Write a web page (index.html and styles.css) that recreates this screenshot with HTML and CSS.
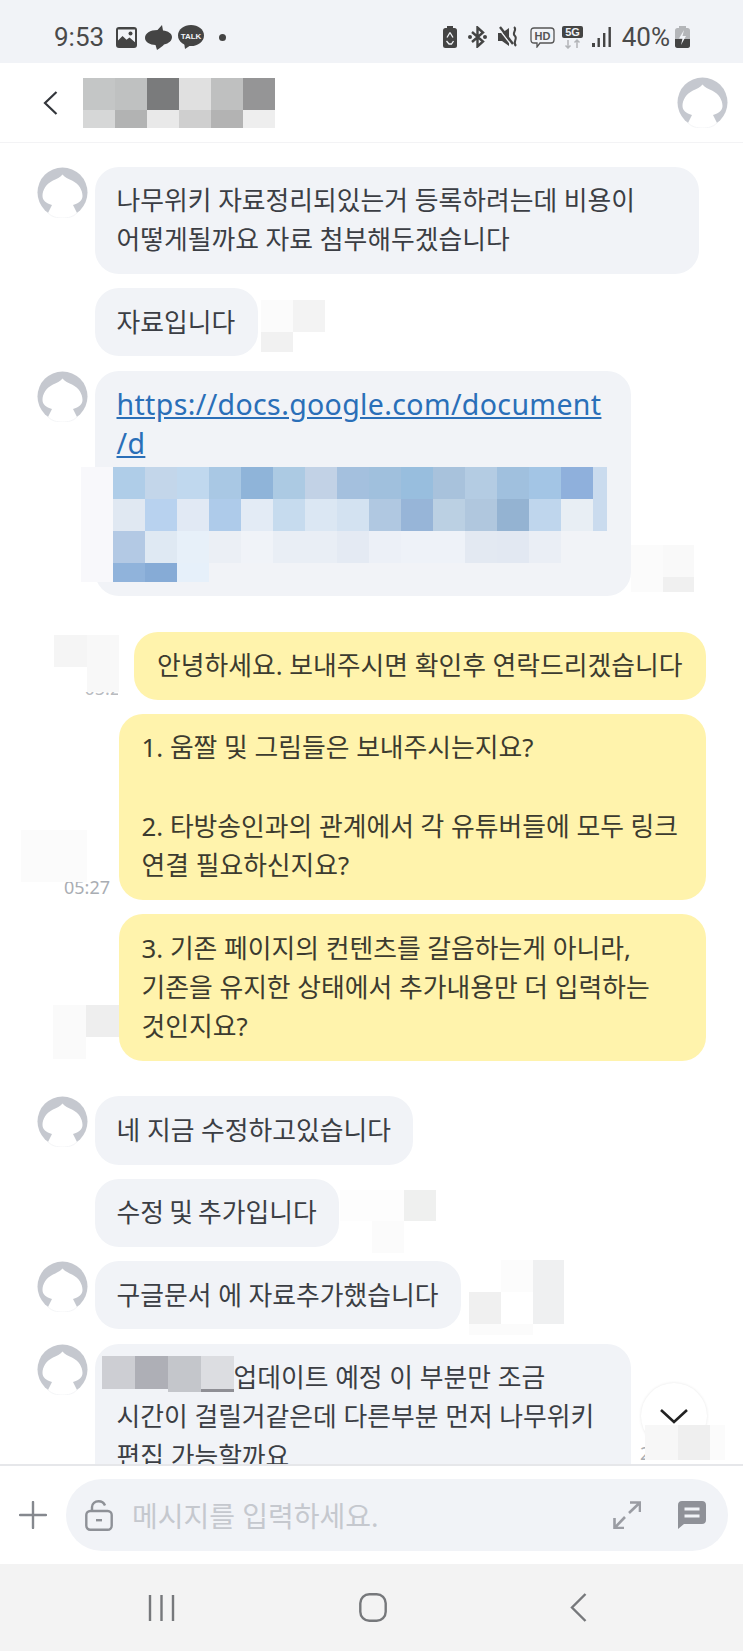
FILE: index.html

```html
<!DOCTYPE html>
<html lang="ko">
<head>
    <meta charset="UTF-8">
    <meta name="viewport" content="width=device-width, initial-scale=1.0">
    <title>채팅</title>
    <link rel="stylesheet" href="styles.css">
</head>
<body>
    <svg class="defs" width="0" height="0">
        <symbol id="avatar" viewBox="0 0 51 51">
            <circle cx="25.5" cy="25.5" r="25" fill="#c5c8cf"/>
            <path d="M25.5 7.5 C23 10.5 20 11.5 16 13.5 C9 17 5.5 23 5.5 29 C5.5 33 9 36.5 15 38 L11 46 C15 50 20 51 25.5 51 C31 51 36 50 40 46 L36 38 C42 36.5 45.5 33 45.5 29 C45.5 23 42 17 35 13.5 C31 11.5 28 10.5 25.5 7.5 Z" fill="#fff"/>
            <path d="M11 46 C15 50 20 51 25.5 51 C31 51 36 50 40 46" fill="none" stroke="#f4f5f7" stroke-width="1"/>
        </symbol>
    </svg>

    <div class="app">
        <div class="status-bar">
            <div class="status-left">
                <span class="clock">9:53</span>
                <svg class="ic-image" width="21" height="21" viewBox="0 0 21 21">
                    <rect width="21" height="21" rx="3" fill="#444"/>
                    <rect x="2" y="2.5" width="17" height="13.5" fill="#f1f3f7"/>
                    <circle cx="14.5" cy="6.5" r="2" fill="#444"/>
                    <path d="M2 16 V13.5 L6.5 9 L10.5 12.8 L13.5 10.5 L19 15.2 V16 Z" fill="#444"/>
                </svg>
                <svg class="ic-bolt" width="27" height="25" viewBox="0 0 27 25">
                    <path d="M17 0 L12.5 5 C5 5 0 8.5 0 13 C0 17 5 20 10.5 20 L12 25 C15 23 18 21 19 19.5 C24 18.5 27 15.5 27 12 C27 8.5 23 6 18 5.5 Z" fill="#444"/>
                </svg>
                <svg class="ic-talk" width="26" height="24" viewBox="0 0 26 24">
                    <ellipse cx="13" cy="10.5" rx="13" ry="10.5" fill="#444"/>
                    <path d="M6 17 L7 24 L13 20 Z" fill="#444"/>
                    <text x="13" y="13.5" text-anchor="middle" class="talk-label">TALK</text>
                </svg>
                <span class="status-dot"></span>
            </div>
            <div class="status-right">
                <svg width="14" height="22" viewBox="0 0 14 22">
                    <rect x="4" y="0" width="6" height="3" fill="#444"/>
                    <rect y="2" width="14" height="20" rx="2.5" fill="#444"/>
                    <path d="M7 6.5 L4 11.5 M7 6.5 L10 11.5 M3.5 15 L6 18 H8.5 L10.5 15" stroke="#f1f3f7" stroke-width="1.3" fill="none"/>
                </svg>
                <svg width="19" height="22" viewBox="0 0 19 22">
                    <path d="M4 6 L15 15.5 L9.5 20.5 V1.5 L15 6.5 L4 16" stroke="#444" stroke-width="2.4" fill="none"/>
                    <circle cx="2" cy="11" r="2" fill="#444"/>
                    <circle cx="17" cy="11" r="2" fill="#444"/>
                </svg>
                <svg width="21" height="22" viewBox="0 0 21 22">
                    <path d="M0 7 H4 L11 2 V20 L4 15 H0 Z" fill="#444"/>
                    <path d="M1 3 L14 20" stroke="#f1f3f7" stroke-width="1.5"/>
                    <path d="M2 1 L15 18" stroke="#444" stroke-width="2.4"/>
                    <path d="M16 1 C20 4 13 7 17 10 C20 13 14 16 18 20" stroke="#444" stroke-width="2" fill="none"/>
                </svg>
                <svg class="ic-hd" width="25" height="21" viewBox="0 0 25 21">
                    <path d="M4 1 H21 C23 1 24 2 24 4 V13 C24 15 23 16 21 16 H10 L7 20 V16 H4 C2 16 1 15 1 13 V4 C1 2 2 1 4 1 Z" fill="none" stroke="#555" stroke-width="1.3"/>
                    <text x="12.5" y="13" text-anchor="middle" class="hd-label">HD</text>
                </svg>
                <svg class="ic-net" width="21" height="23" viewBox="0 0 21 23">
                    <rect width="21" height="12" rx="2" fill="#444"/>
                    <text x="10.5" y="10" text-anchor="middle" class="net-label">5G</text>
                    <path d="M6 14 V22 M3.5 19.5 L6 22 L8.5 19.5 M15 22 V14 M12.5 16.5 L15 14 L17.5 16.5" stroke="#b2b4b8" stroke-width="1.5" fill="none"/>
                </svg>
                <svg class="ic-signal" width="19" height="20" viewBox="0 0 19 20">
                    <rect x="0" y="16" width="3" height="4" fill="#444"/>
                    <rect x="5.5" y="11" width="2.4" height="9" fill="#444"/>
                    <rect x="11" y="6" width="2.4" height="14" fill="#444"/>
                    <rect x="16.5" y="0" width="2.4" height="20" fill="#444"/>
                </svg>
                <span class="battery-text">40%</span>
                <svg class="ic-battery" width="15" height="22" viewBox="0 0 15 22">
                    <rect x="4" y="0" width="7" height="3" fill="#b4b6b9"/>
                    <rect y="2" width="15" height="20" rx="2.5" fill="#b4b6b9"/>
                    <path d="M0 13 H15 V19.5 C15 21 14 22 12.5 22 H2.5 C1 22 0 21 0 19.5 Z" fill="#444"/>
                    <path d="M9 4 L4 12.5 H7.5 L6 19 L11 10 H7.5 Z" fill="#f1f3f7"/>
                </svg>
            </div>
        </div>

        <header class="top-bar">
            <svg class="back" width="15" height="24" viewBox="0 0 15 24">
                <path d="M13.5 1 L2 12 L13.5 23" fill="none" stroke="#33363b" stroke-width="2.2"/>
            </svg>
            <svg class="name-mosaic" width="192" height="50" viewBox="0 0 192 50" shape-rendering="crispEdges">
                <rect x="0" width="32" height="32" fill="#c4c6c6"/><rect x="32" width="32" height="32" fill="#bfc1c1"/>
                <rect x="64" width="32" height="32" fill="#7a7b7c"/><rect x="96" width="32" height="32" fill="#e0e0e0"/>
                <rect x="128" width="32" height="32" fill="#bfc0c0"/><rect x="160" width="32" height="32" fill="#959596"/>
                <rect x="0" y="32" width="32" height="18" fill="#d6d7d7"/><rect x="32" y="32" width="32" height="18" fill="#b2b3b3"/>
                <rect x="64" y="32" width="32" height="18" fill="#e9e9e9"/><rect x="96" y="32" width="32" height="18" fill="#cfcfcf"/>
                <rect x="128" y="32" width="32" height="18" fill="#b3b3b3"/><rect x="160" y="32" width="32" height="18" fill="#eeeeee"/>
            </svg>
            <svg class="avatar top-avatar"><use href="#avatar"/></svg>
        </header>

        <main class="chat">
            <div class="row">
                <svg class="avatar"><use href="#avatar"/></svg>
                <div class="bubble w-full">나무위키 자료정리되있는거 등록하려는데 비용이<br>어떻게될까요 자료 첨부해두겠습니다</div>
            </div>

            <div class="row">
                <div class="bubble">자료입니다</div>
                <svg class="blot blot-a" width="64" height="52" shape-rendering="crispEdges">
                    <rect width="32" height="32" fill="#fbfbfb"/><rect x="32" width="32" height="32" fill="#f3f3f3"/>
                    <rect y="32" width="32" height="20" fill="#f1f1f1"/>
                </svg>
            </div>

            <div class="row">
                <svg class="avatar"><use href="#avatar"/></svg>
                <div class="bubble w-wide">
                    <a class="link" href="#">https://docs.google.com/document<br>/d</a>
                    <svg class="link-mosaic" width="526" height="115" shape-rendering="crispEdges">
                        <rect width="32" height="115" fill="#f8f8fb"/>
                        <g transform="translate(32 0)">
                            <rect x="0" width="32" height="32" fill="#afcde8"/><rect x="32" width="32" height="32" fill="#c3d6ea"/>
                            <rect x="64" width="32" height="32" fill="#c0d8ee"/><rect x="96" width="32" height="32" fill="#a9c8e4"/>
                            <rect x="128" width="32" height="32" fill="#8fb4d9"/><rect x="160" width="32" height="32" fill="#accae3"/>
                            <rect x="192" width="32" height="32" fill="#c2d2e6"/><rect x="224" width="32" height="32" fill="#a4c0de"/>
                            <rect x="256" width="32" height="32" fill="#a0c0dd"/><rect x="288" width="32" height="32" fill="#98bede"/>
                            <rect x="320" width="32" height="32" fill="#a8c2dc"/><rect x="352" width="32" height="32" fill="#b4cce3"/>
                            <rect x="384" width="32" height="32" fill="#a0c0de"/><rect x="416" width="32" height="32" fill="#a3c5e5"/>
                            <rect x="448" width="32" height="32" fill="#8fb0dc"/><rect x="480" width="14" height="32" fill="#cadbee"/>
                        </g>
                        <g transform="translate(32 32)">
                            <rect x="0" width="32" height="32" fill="#e0e8f2"/><rect x="32" width="32" height="32" fill="#b8d2ef"/>
                            <rect x="64" width="32" height="32" fill="#e1e9f4"/><rect x="96" width="32" height="32" fill="#aecbea"/>
                            <rect x="128" width="32" height="32" fill="#e3ebf5"/><rect x="160" width="32" height="32" fill="#c6dbee"/>
                            <rect x="192" width="32" height="32" fill="#dbe7f3"/><rect x="224" width="32" height="32" fill="#d3e2f1"/>
                            <rect x="256" width="32" height="32" fill="#b0c8e1"/><rect x="288" width="32" height="32" fill="#97b5d8"/>
                            <rect x="320" width="32" height="32" fill="#bbd0e3"/><rect x="352" width="32" height="32" fill="#b0c7de"/>
                            <rect x="384" width="32" height="32" fill="#94b3d2"/><rect x="416" width="32" height="32" fill="#bfd6ed"/>
                            <rect x="448" width="32" height="32" fill="#e8eef4"/><rect x="480" width="14" height="32" fill="#cadbee"/>
                        </g>
                        <g transform="translate(32 64)">
                            <rect x="0" width="32" height="32" fill="#b3c9e4"/><rect x="32" width="32" height="32" fill="#dfe9f3"/>
                            <rect x="64" width="32" height="32" fill="#e7f0f9"/><rect x="96" width="32" height="32" fill="#ebeff5"/>
                            <rect x="128" width="32" height="32" fill="#f0f3f8"/><rect x="160" width="32" height="32" fill="#e9eef5"/>
                            <rect x="192" width="32" height="32" fill="#e9eef5"/><rect x="224" width="32" height="32" fill="#e4eaf3"/>
                            <rect x="256" width="32" height="32" fill="#ecf0f7"/><rect x="288" width="32" height="32" fill="#eef2f8"/>
                            <rect x="320" width="32" height="32" fill="#eef2f8"/><rect x="352" width="32" height="32" fill="#e3e9f2"/>
                            <rect x="384" width="32" height="32" fill="#e2e8f2"/><rect x="416" width="32" height="32" fill="#eaeef5"/>
                        </g>
                        <g transform="translate(32 96)">
                            <rect x="0" width="32" height="19" fill="#90b3db"/><rect x="32" width="32" height="19" fill="#86abd6"/>
                            <rect x="64" width="32" height="19" fill="#e6f0fa"/>
                        </g>
                    </svg>
                </div>
                <svg class="blot blot-b" width="63" height="47" shape-rendering="crispEdges">
                    <rect width="32" height="47" fill="#fbfbfb"/><rect x="32" width="31" height="32" fill="#f9f9f9"/>
                    <rect x="32" y="32" width="31" height="15" fill="#f0f0f0"/>
                </svg>
            </div>

            <div class="row mine group-start">
                <div class="side side-first">
                    <span class="time time-first">05:27</span>
                    <svg class="blot blot-c" width="65" height="57" shape-rendering="crispEdges">
                        <rect width="33" height="32" fill="#f5f5f5"/><rect x="33" width="32" height="57" fill="#f8f8f8"/>
                        <rect y="32" width="33" height="25" fill="#fff"/>
                    </svg>
                </div>
                <div class="bubble bubble-mine w-first">안녕하세요. 보내주시면 확인후 연락드리겠습니다</div>
            </div>

            <div class="row mine">
                <div class="side side-second">
                    <span class="time">05:27</span>
                    <svg class="blot blot-d" width="66" height="52" shape-rendering="crispEdges">
                        <rect width="66" height="52" fill="#fbfbfb"/>
                    </svg>
                </div>
                <div class="bubble bubble-mine w-mine">1. 움짤 및 그림들은 보내주시는지요?<br><br>2. 타방송인과의 관계에서 각 유튜버들에 모두 링크<br>연결 필요하신지요?</div>
            </div>

            <div class="row mine">
                <svg class="blot blot-e" width="66" height="54" shape-rendering="crispEdges">
                    <rect width="33" height="54" fill="#fafafa"/><rect x="33" width="33" height="32" fill="#eeeeee"/>
                </svg>
                <div class="bubble bubble-mine w-mine">3. 기존 페이지의 컨텐츠를 갈음하는게 아니라,<br>기존을 유지한 상태에서 추가내용만 더 입력하는<br>것인지요?</div>
            </div>

            <div class="row group-start">
                <svg class="avatar"><use href="#avatar"/></svg>
                <div class="bubble">네 지금 수정하고있습니다</div>
            </div>

            <div class="row">
                <div class="bubble w-short">수정 및 추가입니다</div>
                <svg class="blot blot-f" width="96" height="63" shape-rendering="crispEdges">
                    <rect width="64" height="31" fill="#fdfdfd"/><rect x="64" width="32" height="31" fill="#eff0ef"/>
                    <rect x="32" y="31" width="32" height="32" fill="#fbfbfb"/>
                </svg>
            </div>

            <div class="row">
                <svg class="avatar"><use href="#avatar"/></svg>
                <div class="bubble">구글문서 에 자료추가했습니다</div>
                <svg class="blot blot-g" width="95" height="75" shape-rendering="crispEdges">
                    <rect x="32" width="32" height="32" fill="#fcfcfc"/><rect x="64" width="31" height="64" fill="#eff0f1"/>
                    <rect y="32" width="32" height="32" fill="#f0f0f0"/><rect y="64" width="64" height="11" fill="#fbfbfb"/>
                </svg>
            </div>

            <div class="row">
                <svg class="avatar"><use href="#avatar"/></svg>
                <div class="bubble w-wide">
                    <svg class="inline-mosaic" width="132" height="36" shape-rendering="crispEdges">
                        <rect width="33" height="33" fill="#cdced3"/><rect x="33" width="33" height="33" fill="#aeafb6"/>
                        <rect x="66" width="33" height="36" fill="#c4c6cb"/><rect x="99" width="33" height="33" fill="#dcdde1"/>
                        <rect x="99" y="33" width="33" height="3" fill="#8f8f95"/>
                    </svg>
                    <span class="after-mosaic">업데이트 예정 이 부분만 조금</span><br>시간이 걸릴거같은데 다른부분 먼저 나무위키<br>편집 가능할까요
                </div>
            </div>

            <button class="scroll-down">
                <svg width="30" height="16" viewBox="0 0 30 16">
                    <path d="M2 2 L15 14 L28 2" fill="none" stroke="#222" stroke-width="2.6"/>
                </svg>
            </button>
            <span class="time time-cut">2</span>
            <svg class="blot blot-h" width="80" height="35" shape-rendering="crispEdges">
                <rect width="33" height="35" fill="#f7f7f7"/><rect x="33" width="32" height="35" fill="#efefef"/>
                <rect x="65" width="15" height="35" fill="#fbfbfb"/>
            </svg>
        </main>

        <footer class="composer">
            <svg class="plus" width="28" height="28" viewBox="0 0 28 28">
                <path d="M14 1 V27 M1 14 H27" stroke="#85888e" stroke-width="2.4" fill="none" stroke-linecap="round"/>
            </svg>
            <div class="input-pill">
                <svg width="28" height="31" viewBox="0 0 28 31">
                    <rect x="1.3" y="11" width="25.4" height="18.7" rx="4" fill="none" stroke="#8e9197" stroke-width="2.4"/>
                    <path d="M7 11 V7 C7 3.5 10 1.3 13.5 1.3 C16.5 1.3 19 3 20 5.5" fill="none" stroke="#8e9197" stroke-width="2.4"/>
                    <rect x="11" y="19" width="6" height="2.4" fill="#8e9197"/>
                </svg>
                <span class="placeholder">메시지를 입력하세요.</span>
                <svg class="expand" width="28" height="28" viewBox="0 0 28 28">
                    <path d="M17 1.5 H27 V11 M27 1.5 L16 12 M11 27 H1.5 V17 M1.5 27 L12 16" fill="none" stroke="#9a9ca3" stroke-width="2.6"/>
                </svg>
                <svg width="28" height="28" viewBox="0 0 28 28">
                    <path d="M4 0 H24 C26.5 0 28 1.5 28 4 V19 C28 21.5 26.5 23 24 23 H6 L0 28 V4 C0 1.5 1.5 0 4 0 Z" fill="#8f9198"/>
                    <path d="M6.5 8 H21.5 M6.5 15 H21.5" stroke="#f1f3f7" stroke-width="3"/>
                </svg>
            </div>
        </footer>

        <nav class="nav-bar">
            <svg width="27" height="28" viewBox="0 0 27 28">
                <path d="M2 1 V27 M13.5 1 V27 M25 1 V27" stroke="#76787b" stroke-width="2.4" fill="none"/>
            </svg>
            <svg width="28" height="29" viewBox="0 0 28 29">
                <rect x="1.3" y="1.3" width="25.4" height="26.4" rx="9" fill="none" stroke="#76787b" stroke-width="2.4"/>
            </svg>
            <svg width="17" height="29" viewBox="0 0 17 29">
                <path d="M15.5 1 L2 14.5 L15.5 28" fill="none" stroke="#76787b" stroke-width="2.4"/>
            </svg>
        </nav>
    </div>
</body>
</html>
```

FILE: styles.css

```css
* {
    box-sizing: border-box;
}
body {
    margin: 0;
    background: #fff;
    font-family: "Noto Sans", "Noto Sans CJK KR", sans-serif;
    color: #3b3e44;
}
.defs {
    position: absolute;
}
.app {
    display: flex;
    flex-direction: column;
    width: 743px;
    height: 1651px;
    overflow: hidden;
}

/* status bar */
.status-bar {
    flex: none;
    display: flex;
    justify-content: space-between;
    align-items: center;
    height: 63px;
    padding: 22px 53px 11px 54px;
    background: #f1f3f7;
    color: #4a4a4a;
}
.status-left, .status-right {
    display: flex;
    align-items: center;
}
.clock, .battery-text {
    font-family: Roboto, sans-serif;
    font-size: 26px;
}
.ic-image {
    margin-left: 12px;
}
.ic-bolt {
    margin-left: 8px;
}
.ic-talk {
    margin-left: 6px;
}
.talk-label {
    font: bold 8px "Liberation Sans", sans-serif;
    fill: #f1f3f7;
}
.hd-label {
    font: bold 11px "Liberation Sans", sans-serif;
    fill: #555;
}
.net-label {
    font: bold 11px "Liberation Sans", sans-serif;
    fill: #f1f3f7;
}
.status-dot {
    width: 7px;
    height: 7px;
    margin-left: 15px;
    border-radius: 50%;
    background: #444;
}
.status-right {
    gap: 11px;
}
.ic-net {
    margin-left: -4px;
}
.ic-signal {
    margin-left: -2px;
}
.battery-text {
    margin-right: -6px;
}

/* top bar */
.top-bar {
    flex: none;
    display: flex;
    align-items: center;
    height: 80px;
    padding: 0 15px 0 43px;
    border-bottom: 1px solid #f3f3f5;
}
.name-mosaic {
    margin-left: 25px;
}
.avatar {
    flex: none;
    width: 51px;
    height: 51px;
}
.top-avatar {
    margin-left: auto;
}

/* messages */
.chat {
    position: relative;
    flex: 1;
    display: flex;
    flex-direction: column;
    gap: 14.3px;
    min-height: 0;
    padding: 23.5px 37px 0 37px;
    overflow: hidden;
}
.row {
    flex: none;
    display: flex;
    align-items: flex-start;
    gap: 7px;
}
.row > .bubble:first-child {
    margin-left: 58px;
}
.row.mine {
    justify-content: flex-end;
    gap: 0;
}
.group-start {
    margin-top: 21.3px;
}
.bubble {
    flex: none;
    padding: 14.4px 22.5px 14.4px 21.5px;
    border-radius: 24px;
    background: #f1f3f7;
    font-size: 25.8px;
    line-height: 39.3px;
    white-space: nowrap;
}
.w-full {
    width: 604px;
}
.w-wide {
    width: 536px;
}
.w-short {
    width: 244px;
    word-spacing: -1.5px;
}
.bubble-mine {
    background: #fff3ac;
    color: #3c3b2f;
}
.w-first {
    width: 572px;
    padding-left: 23px;
}
.w-mine {
    width: 587px;
    padding-left: 22.5px;
}
.link {
    display: block;
    color: #2a6fb8;
    font-size: 28.5px;
    letter-spacing: 0.36px;
}
.link-mosaic {
    display: block;
    margin: 3px 0 0 -36px;
}
.inline-mosaic {
    position: absolute;
    margin: -2px 0 0 -15px;
}
.after-mosaic {
    margin-left: 117px;
}

/* redacted blots and timestamps */
.blot {
    flex: none;
    display: block;
}
.blot-a {
    margin: 12px 0 0 -4px;
}
.blot-b {
    margin: 174px 0 0 -7px;
}
.blot-e {
    margin: 91px 0 0 0;
}
.blot-f {
    margin: 11px 0 -6px -6px;
}
.blot-g {
    margin: -1px 0 -6px 1px;
}
.side {
    position: relative;
    flex: none;
}
.side-first {
    width: 65px;
    height: 67px;
    margin-right: 15.5px;
}
.side-second {
    width: 98px;
    height: 186px;
}
.time {
    position: absolute;
    font-family: "Noto Sans", sans-serif;
    font-size: 18px;
    line-height: 20px;
    color: #a9adb3;
}
.time-first {
    top: 46px;
    left: 31px;
    width: 33px;
    overflow: hidden;
    color: #b8bbc0;
}
.side-second .time {
    top: 163px;
    right: 9px;
}
.blot-c {
    position: absolute;
    top: 3px;
    left: 0;
}
.blot-d {
    position: absolute;
    top: 116px;
    left: 0;
}
.time-cut {
    top: 1300px;
    left: 640px;
    width: 5px;
    overflow: hidden;
}
.scroll-down {
    position: absolute;
    top: 1240px;
    left: 641px;
    display: flex;
    align-items: center;
    justify-content: center;
    width: 66px;
    height: 66px;
    padding: 0;
    border: none;
    border-radius: 50%;
    background: #fff;
    box-shadow: 0 0 3px #e6e6e6;
}
.blot-h {
    position: absolute;
    top: 1282px;
    left: 645px;
}

/* composer */
.composer {
    flex: none;
    display: flex;
    align-items: center;
    height: 100px;
    padding: 0 14.6px 0 19px;
    border-top: 2px solid #e6e7ea;
    background: #fff;
}
.input-pill {
    flex: 1;
    display: flex;
    align-items: center;
    height: 72px;
    margin-left: 19px;
    padding: 0 22px 0 19px;
    border-radius: 36px;
    background: #f1f3f7;
}
.placeholder {
    flex: 1;
    margin-left: 19px;
    font-size: 28px;
    color: #c5c8ce;
}
.expand {
    margin-right: 37px;
}

/* navigation bar */
.nav-bar {
    flex: none;
    display: flex;
    align-items: center;
    justify-content: space-between;
    height: 87px;
    padding: 0 156px 0 148px;
    background: #f3f3f3;
}
```
